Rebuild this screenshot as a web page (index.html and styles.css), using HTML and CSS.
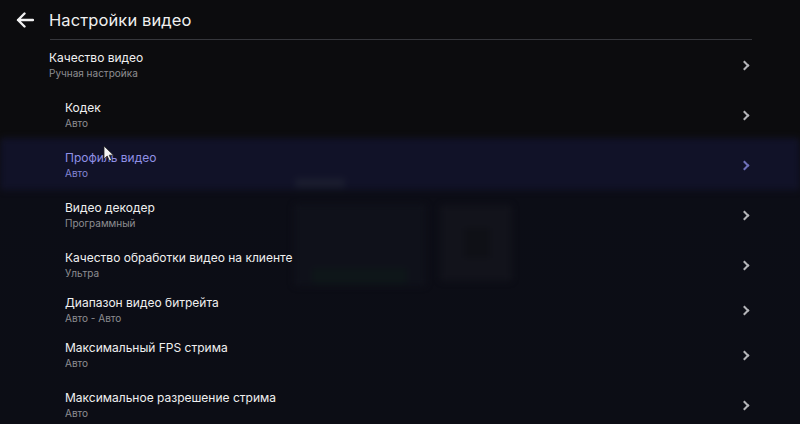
FILE: index.html
```html
<!DOCTYPE html>
<html lang="ru">
<head>
    <meta charset="UTF-8">
    <meta name="viewport" content="width=device-width, initial-scale=1.0">
    <title>Настройки видео</title>
    <link rel="stylesheet" href="styles.css">
</head>
<body>

    <div class="screen">
        <!-- blurred app behind the settings overlay -->
        <div class="backdrop">
            <div class="ghost ghost-top"></div>
            <div class="ghost ghost-logo"></div>
            <div class="ghost ghost-card"></div>
            <div class="ghost ghost-bar"></div>
            <div class="ghost ghost-tile"></div>
            <div class="ghost ghost-icon"></div>
        </div>

        <div class="panel">
            <div class="header">
                <svg class="back" width="18" height="16" viewBox="0 0 18 16">
                    <path d="M17 8H2M8.5 1.5L2 8l6.5 6.5" fill="none" stroke="#f2f2f2" stroke-width="2.4" stroke-linecap="round" stroke-linejoin="round"/>
                </svg>
                <h1 class="title">Настройки видео</h1>
            </div>
            <div class="divider"></div>

            <div class="list">
                <div class="row row-top">
                    <div class="text">
                        <div class="name">Качество видео</div>
                        <div class="value">Ручная настройка</div>
                    </div>
                    <span class="chevron"></span>
                </div>
                <div class="row">
                    <div class="text">
                        <div class="name">Кодек</div>
                        <div class="value">Авто</div>
                    </div>
                    <span class="chevron"></span>
                </div>
                <div class="row active">
                    <div class="text">
                        <div class="name">Профиль видео</div>
                        <div class="value">Авто</div>
                    </div>
                    <span class="chevron"></span>
                </div>
                <div class="row">
                    <div class="text">
                        <div class="name">Видео декодер</div>
                        <div class="value">Программный</div>
                    </div>
                    <span class="chevron"></span>
                </div>
                <div class="row">
                    <div class="text">
                        <div class="name">Качество обработки видео на клиенте</div>
                        <div class="value">Ультра</div>
                    </div>
                    <span class="chevron"></span>
                </div>
                <div class="row row-compact">
                    <div class="text">
                        <div class="name">Диапазон видео битрейта</div>
                        <div class="value">Авто - Авто</div>
                    </div>
                    <span class="chevron"></span>
                </div>
                <div class="row">
                    <div class="text">
                        <div class="name">Максимальный FPS стрима</div>
                        <div class="value">Авто</div>
                    </div>
                    <span class="chevron"></span>
                </div>
                <div class="row">
                    <div class="text">
                        <div class="name">Максимальное разрешение стрима</div>
                        <div class="value">Авто</div>
                    </div>
                    <span class="chevron"></span>
                </div>
            </div>
        </div>

        <svg class="cursor" width="12" height="17" viewBox="0 0 12 17">
            <path d="M1 1v13l3.2-3 2.3 5 2-1-2.3-4.8H10.5z" fill="#f4f4f4" stroke="#222" stroke-width="0.8" stroke-linejoin="round"/>
        </svg>
    </div>

</body>
</html>
```

FILE: styles.css
```css
* {
    box-sizing: border-box;
}
body {
    margin: 0;
    font-family: Inter, "Noto Sans", sans-serif;
    background-color: #0c0c0f;
    color: #ececec;
}
.screen {
    position: relative;
    width: 800px;
    height: 424px;
    overflow: hidden;
    background: linear-gradient(#0c0c0e 0, #0c0c0e 138px, #0c0d16 190px, #0c0d15 100%);
}
.backdrop {
    position: absolute;
    inset: 0;
    filter: blur(3px);
}
.ghost {
    position: absolute;
    border-radius: 3px;
}
.ghost-top {
    left: 0;
    top: 138px;
    width: 800px;
    height: 52px;
    background-color: #111228;
}
.ghost-logo {
    left: 295px;
    top: 178px;
    width: 50px;
    height: 10px;
    background-color: #1a1c2e;
}
.ghost-card {
    left: 294px;
    top: 204px;
    width: 132px;
    height: 82px;
    background-color: #0f111a;
}
.ghost-bar {
    left: 312px;
    top: 268px;
    width: 95px;
    height: 16px;
    background-color: #0e1619;
}
.ghost-tile {
    left: 440px;
    top: 205px;
    width: 72px;
    height: 76px;
    background-color: #12131b;
}
.ghost-icon {
    left: 464px;
    top: 228px;
    width: 26px;
    height: 30px;
    background-color: #0f1016;
}
.panel {
    position: relative;
}
.header {
    display: flex;
    align-items: center;
    height: 39px;
    padding-left: 16px;
}
.back {
    display: block;
    margin-right: 15px;
}
.title {
    margin: 0;
    font-size: 16.5px;
    font-weight: 400;
    letter-spacing: 0.1px;
    color: #f0f0f0;
}
.divider {
    height: 1px;
    margin: 0 48px 0 50px;
    background-color: #36373c;
}
.row {
    display: flex;
    align-items: center;
    justify-content: space-between;
    height: 50px;
    padding: 0 50px 0 65px;
}
.row-top {
    padding-left: 49px;
}
.row-compact {
    height: 40px;
}
.text {
    margin-bottom: 2px;
}
.name {
    font-size: 12px;
    line-height: 16px;
    color: #f0f0f0;
}
.value {
    margin-top: 1px;
    font-size: 10px;
    line-height: 12px;
    color: #8e8e92;
}
.chevron {
    width: 7px;
    height: 7px;
    margin-right: 2px;
    border-top: 2px solid #b4b4b8;
    border-right: 2px solid #b4b4b8;
    transform: rotate(45deg);
}
.active .name {
    color: #8f90e6;
}
.active .value {
    color: #8385d4;
}
.active .chevron {
    border-color: #6f70b8;
}
.cursor {
    position: absolute;
    left: 103px;
    top: 145px;
}
```
